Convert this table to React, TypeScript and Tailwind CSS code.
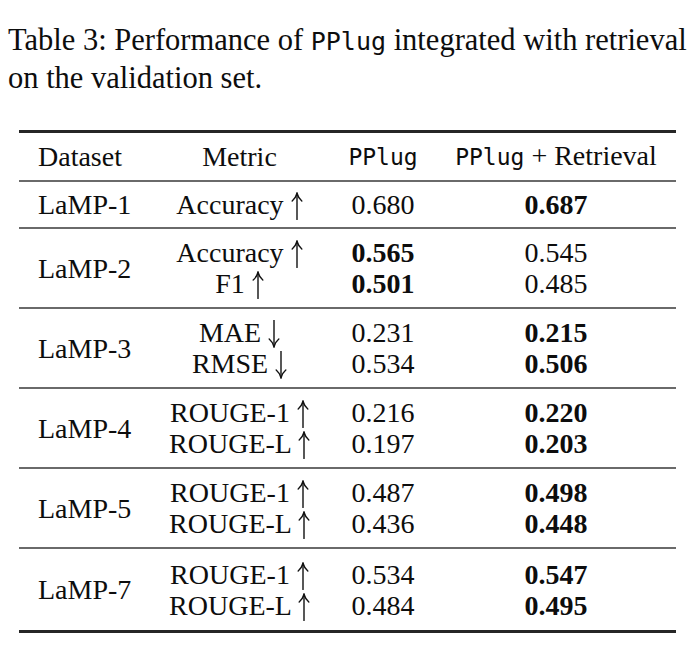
const serif = 'font-["Liberation_Serif","Times_New_Roman",serif]'
const mono = 'font-["DejaVu_Sans_Mono","Liberation_Mono",monospace]'

type Row = { metric: string; dir: 'up' | 'down'; plug: string; retr: string; bold: 'plug' | 'retr' }

const groups: { name: string; rows: Row[] }[] = [
  { name: 'LaMP-1', rows: [{ metric: 'Accuracy', dir: 'up', plug: '0.680', retr: '0.687', bold: 'retr' }] },
  {
    name: 'LaMP-2',
    rows: [
      { metric: 'Accuracy', dir: 'up', plug: '0.565', retr: '0.545', bold: 'plug' },
      { metric: 'F1', dir: 'up', plug: '0.501', retr: '0.485', bold: 'plug' }
    ]
  },
  {
    name: 'LaMP-3',
    rows: [
      { metric: 'MAE', dir: 'down', plug: '0.231', retr: '0.215', bold: 'retr' },
      { metric: 'RMSE', dir: 'down', plug: '0.534', retr: '0.506', bold: 'retr' }
    ]
  },
  {
    name: 'LaMP-4',
    rows: [
      { metric: 'ROUGE-1', dir: 'up', plug: '0.216', retr: '0.220', bold: 'retr' },
      { metric: 'ROUGE-L', dir: 'up', plug: '0.197', retr: '0.203', bold: 'retr' }
    ]
  },
  {
    name: 'LaMP-5',
    rows: [
      { metric: 'ROUGE-1', dir: 'up', plug: '0.487', retr: '0.498', bold: 'retr' },
      { metric: 'ROUGE-L', dir: 'up', plug: '0.436', retr: '0.448', bold: 'retr' }
    ]
  },
  {
    name: 'LaMP-7',
    rows: [
      { metric: 'ROUGE-1', dir: 'up', plug: '0.534', retr: '0.547', bold: 'retr' },
      { metric: 'ROUGE-L', dir: 'up', plug: '0.484', retr: '0.495', bold: 'retr' }
    ]
  }
]

const cols = 'grid grid-cols-[130px_181px_106px_240px]'

// thin math-style arrow, like \uparrow / \downarrow
function Arrow({ dir }: { dir: 'up' | 'down' }) {
  return (
    <svg
      width="12"
      height="28"
      viewBox="0 0 12 28"
      className={`inline-block align-[-6px] ${dir === 'down' ? 'rotate-180' : ''}`}
      fill="none"
      stroke="#111"
      strokeWidth="1.4"
      strokeLinecap="round"
    >
      <path d="M6 1.5 V27.5" />
      <path d="M1.2 9 Q4.6 6.2 6 1.2 Q7.4 6.2 10.8 9" />
    </svg>
  )
}

function Group({ name, rows, height, last }: { name: string; rows: Row[]; height: string; last?: boolean }) {
  return (
    <div className={`${cols} ${height} items-center ${last ? '' : 'border-b-2 border-[#6a6a6a]'}`}>
      <div className="pl-[19px]">{name}</div>
      <div className="col-span-3 flex flex-col">
        {rows.map((r, i) => (
          <div key={i} className="grid h-[31px] grid-cols-[181px_106px_240px] items-center">
            <div className="text-center">
              {r.metric} <Arrow dir={r.dir} />
            </div>
            <div className={`text-center ${r.bold === 'plug' ? 'font-bold' : ''}`}>{r.plug}</div>
            <div className={`text-center ${r.bold === 'retr' ? 'font-bold' : ''}`}>{r.retr}</div>
          </div>
        ))}
      </div>
    </div>
  )
}

export default function App() {
  return (
    <div className={`h-[652px] w-[700px] bg-white text-[28px] text-[#0d0d0d] ${serif}`}>
      <p className="pl-[8px] pt-[22px] text-[30.5px] leading-[37px]">
        Table 3: Performance of <span className={`${mono} text-[25px]`}>PPlug</span> integrated with retrieval
        <br />
        on the validation set.
      </p>

      <div className="ml-[19px] mt-[33px] w-[657px] border-y-[3px] border-[#262626] leading-[31px]">
        <div className={`${cols} h-[49px] items-center border-b-2 border-[#6a6a6a]`}>
          <div className="pl-[19px]">Dataset</div>
          <div className="text-center">Metric</div>
          <div className="text-center">
            <span className={`${mono} text-[23px]`}>PPlug</span>
          </div>
          <div className="text-center">
            <span className={`${mono} text-[23px]`}>PPlug</span> + Retrieval
          </div>
        </div>
        {groups.map((g, i) => (
          <Group
            key={g.name}
            name={g.name}
            rows={g.rows}
            height={i === 0 ? 'h-[47px]' : i === groups.length - 1 ? 'h-[81px]' : 'h-[80px]'}
            last={i === groups.length - 1}
          />
        ))}
      </div>
    </div>
  )
}
